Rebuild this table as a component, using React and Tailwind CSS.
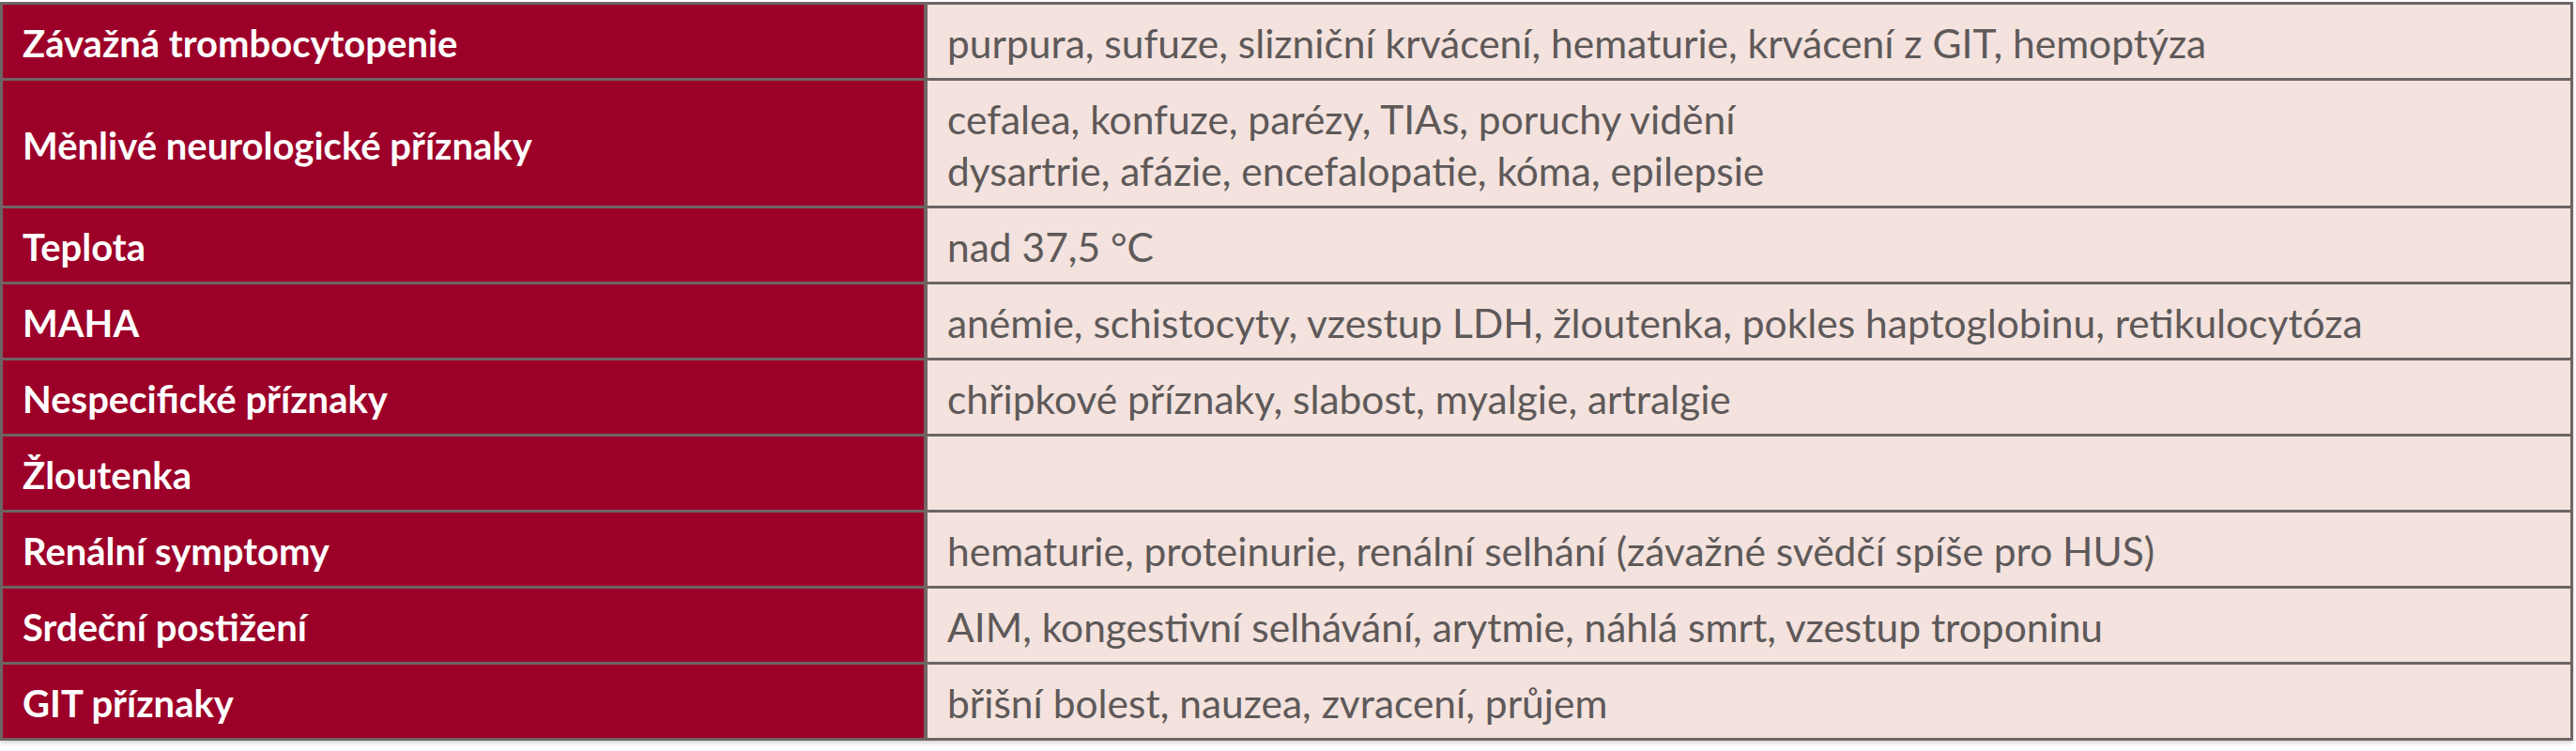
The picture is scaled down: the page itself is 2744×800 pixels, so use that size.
const radky = [
  { nazev: "Závažná trombocytopenie", text: ["purpura, sufuze, slizniční krvácení, hematurie, krvácení z GIT, hemoptýza"] },
  {
    nazev: "Měnlivé neurologické příznaky",
    text: ["cefalea, konfuze, parézy, TIAs, poruchy vidění", "dysartrie, afázie, encefalopatie, kóma, epilepsie"],
    vysoky: true,
  },
  { nazev: "Teplota", text: ["nad 37,5 °C"] },
  { nazev: "MAHA", text: ["anémie, schistocyty, vzestup LDH, žloutenka, pokles haptoglobinu, retikulocytóza"] },
  { nazev: "Nespecifické příznaky", text: ["chřipkové příznaky, slabost, myalgie, artralgie"] },
  { nazev: "Žloutenka", text: [] },
  { nazev: "Renální symptomy", text: ["hematurie, proteinurie, renální selhání (závažné svědčí spíše pro HUS)"] },
  { nazev: "Srdeční postižení", text: ["AIM, kongestivní selhávání, arytmie, náhlá smrt, vzestup troponinu"] },
  { nazev: "GIT příznaky", text: ["břišní bolest, nauzea, zvracení, průjem"] },
];

export default function App() {
  return (
    <div className="w-[2744px] h-[800px] bg-white pt-[2px] font-['Lato',sans-serif]">
      <div className="w-[2741px] border-[3px] border-[#6d6565] shadow-[0_3px_4px_rgba(0,0,0,0.15)]">
        {radky.map((r, i) => {
          const posledni = i === radky.length - 1;
          return (
            <div
              key={r.nazev}
              className={`grid grid-cols-[981px_1fr] ${posledni ? "h-[78px]" : "border-b-[3px] border-[#2e2424]/70"} ${r.vysoky ? "h-[136px]" : ""} ${!posledni && !r.vysoky ? "h-[81px]" : ""}`}
            >
              <div className="flex items-center bg-[#9c0029] pl-[21px] pt-[4px] text-[40px] font-bold leading-none text-white">
                {r.nazev}
              </div>
              <div className="flex flex-col justify-center border-l-[4px] border-[#3a3030]/70 bg-[#f3e2dd] pl-[21px] pt-[2px] text-[42.5px] leading-[55px] text-[#5e5959]">
                {r.text.map((t) => (
                  <div key={t}>{t}</div>
                ))}
              </div>
            </div>
          );
        })}
      </div>
    </div>
  );
}
